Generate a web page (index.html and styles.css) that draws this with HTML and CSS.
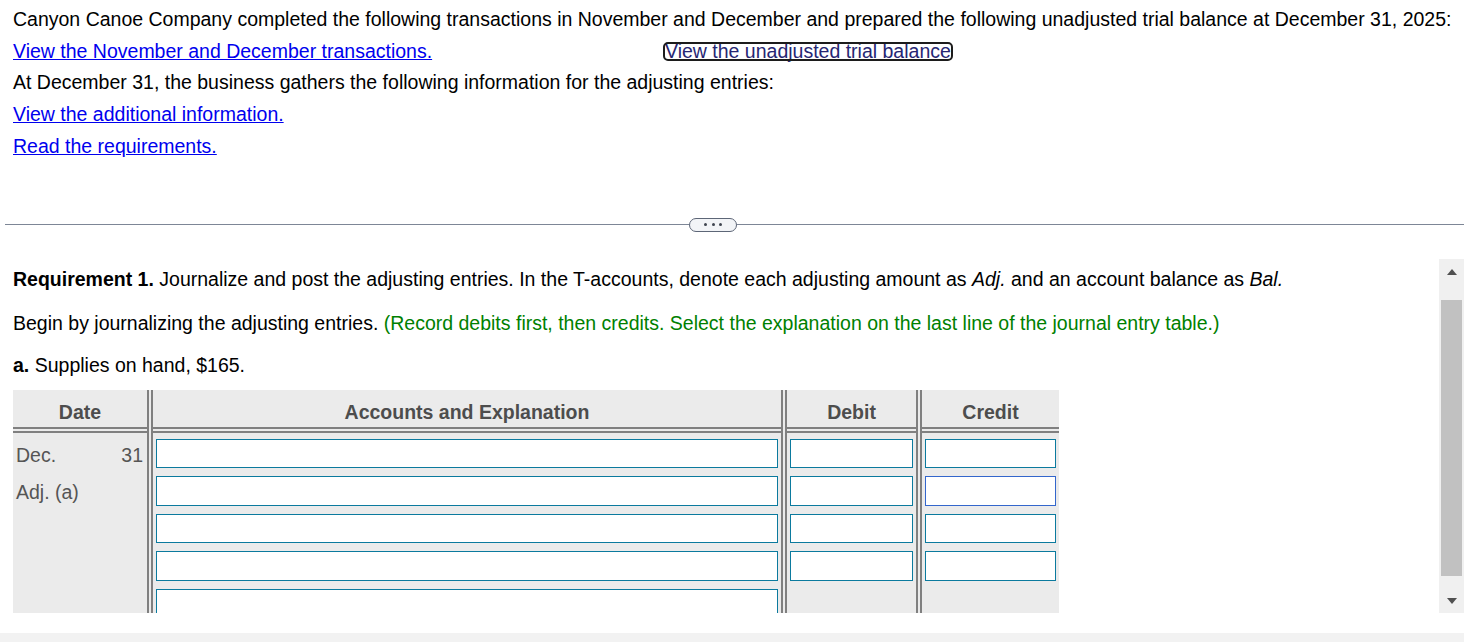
FILE: index.html
```html
<!DOCTYPE html>
<html lang="en">
<head>
<meta charset="utf-8">
<title>Adjusting entries</title>
<link rel="stylesheet" href="styles.css">
</head>
<body>
<div class="page">
  <div class="intro">
    <p class="line nowrap">Canyon Canoe Company completed the following transactions in November and December and prepared the following unadjusted trial balance at December 31, 2025:</p>
    <div class="line link-row">
      <span class="link-cell"><a class="link" href="#">View the November and December transactions.</a></span>
      <a class="link link-focus" href="#">View the unadjusted trial balance</a>
    </div>
    <p class="line">At December 31, the business gathers the following information for the adjusting entries:</p>
    <p class="line"><a class="link" href="#">View the additional information.</a></p>
    <p class="line"><a class="link" href="#">Read the requirements.</a></p>
  </div>

  <div class="divider">
    <span class="divider-line left"></span>
    <span class="pill"><i class="dot"></i><i class="dot"></i><i class="dot"></i></span>
    <span class="divider-line right"></span>
  </div>

  <div class="pane">
    <div class="pane-content">
      <p class="req"><b>Requirement 1.</b> Journalize and post the adjusting entries. In the T-accounts, denote each adjusting amount as <i>Adj.</i> and an account balance as <i>Bal.</i></p>
      <p class="req begin">Begin by journalizing the adjusting entries. <span class="hint">(Record debits first, then credits. Select the explanation on the last line of the journal entry table.)</span></p>
      <p class="req item"><b>a.</b> Supplies on hand, $165.</p>

      <div class="journal">
        <div class="th c-date">Date</div>
        <div class="th c-acct">Accounts and Explanation</div>
        <div class="th c-debit">Debit</div>
        <div class="th c-credit">Credit</div>

        <div class="hsep"></div>

        <div class="td c-date date-cell">
          <div class="date-row"><span>Dec.</span><span>31</span></div>
          <div class="date-row"><span>Adj. (a)</span></div>
        </div>
        <div class="td c-acct">
          <input class="inp" type="text">
          <input class="inp" type="text">
          <input class="inp" type="text">
          <input class="inp" type="text">
          <input class="inp" type="text">
        </div>
        <div class="td c-debit">
          <input class="inp" type="text">
          <input class="inp" type="text">
          <input class="inp" type="text">
          <input class="inp" type="text">
        </div>
        <div class="td c-credit">
          <input class="inp" type="text">
          <input class="inp inp-hover" type="text">
          <input class="inp" type="text">
          <input class="inp" type="text">
        </div>

        <div class="vsep v1"></div>
        <div class="vsep v2"></div>
        <div class="vsep v3"></div>
      </div>
    </div>
    <div class="scrollbar">
      <div class="sb-up"><span class="tri-up"></span></div>
      <div class="sb-thumb"></div>
      <div class="sb-down"><span class="tri-down"></span></div>
    </div>
  </div>

  <div class="footer-strip"></div>
</div>
</body>
</html>
```

FILE: styles.css
```css
html, body {
  margin: 0;
  padding: 0;
  overflow: hidden;
  background: #ffffff;
}

body {
  font-family: "Liberation Sans", Arial, sans-serif;
  font-size: 19.5px;
  color: #000000;
}

.page {
  width: 1464px;
}

/* ---------- intro ---------- */
.intro {
  padding: 4px 0 0 13px;
}

.line {
  margin: 0;
  line-height: 31.7px;
  height: 31.7px;
}

.nowrap {
  white-space: nowrap;
}

.link-row {
  display: flex;
  align-items: baseline;
}

.link-cell {
  width: 652px;
  flex: none;
}

.link {
  color: #0000ee;
  text-decoration: underline;
}

.link-focus {
  display: inline-block;
  line-height: 15px;
  color: #262673;
  outline: 2px solid #1c1c1c;
  border-radius: 3px;
  white-space: nowrap;
}

/* ---------- divider ---------- */
.divider {
  display: flex;
  align-items: flex-start;
  height: 14px;
  margin-top: 55.5px;
}

.divider-line {
  height: 1px;
  margin-top: 6px;
  background: #7d8696;
}

.divider-line.left {
  margin-left: 5px;
  width: 684px;
}

.divider-line.right {
  flex: 1;
}

.pill {
  box-sizing: border-box;
  width: 48px;
  height: 14px;
  border: 1px solid #5d6677;
  border-radius: 7px;
  background: #f2f4f7;
  display: flex;
  align-items: center;
  justify-content: center;
  gap: 4.5px;
}

.dot {
  width: 3px;
  height: 3px;
  border-radius: 50%;
  background: #3f4550;
}

/* ---------- scroll pane ---------- */
.pane {
  display: flex;
  height: 354px;
  margin-top: 27px;
  overflow: hidden;
}

.pane-content {
  flex: 1;
  min-width: 0;
  overflow: hidden;
  padding: 9px 0 0 13px;
}

.req {
  margin: 0;
  line-height: 22px;
  white-space: nowrap;
}

.req.begin {
  margin-top: 22px;
}

.req.item {
  margin-top: 20px;
}

.hint {
  color: #008000;
}

/* ---------- journal table ---------- */
.journal {
  margin-top: 14px;
  width: 1046px;
  display: grid;
  grid-template-columns: 134px 6px 628px 6px 129px 6px 137px;
  grid-template-rows: 37px 6px auto;
  background: #ebebeb;
  color: #555555;
}

.c-date { grid-column: 1; }
.c-acct { grid-column: 3; }
.c-debit { grid-column: 5; }
.c-credit { grid-column: 7; }

.th {
  grid-row: 1;
  box-sizing: border-box;
  text-align: center;
  font-weight: bold;
  color: #4d4d4d;
  padding-top: 7px;
  line-height: 30px;
}

.hsep {
  grid-row: 2;
  grid-column: 1 / -1;
  border-top: 2px solid #808080;
  border-bottom: 2px solid #808080;
}

.vsep {
  grid-row: 1 / -1;
  background: #ebebeb;
  border-left: 2px solid #808080;
  border-right: 2px solid #808080;
}

.v1 { grid-column: 2; }
.v2 { grid-column: 4; }
.v3 { grid-column: 6; }

.td {
  grid-row: 3;
  display: flex;
  flex-direction: column;
  padding-top: 2px;
  padding-bottom: 10px;
}

.date-cell {
  padding-top: 4px;
}

.date-row {
  display: flex;
  justify-content: space-between;
  height: 37.5px;
  line-height: 37.5px;
  padding: 0 4px 0 3px;
}

.inp {
  display: block;
  flex: none;
  box-sizing: border-box;
  width: calc(100% - 6px);
  height: 29.5px;
  margin: 4px 3px;
  padding: 0;
  border: 1px solid #0b7a9e;
  border-radius: 0;
  background: #ffffff;
  outline: none;
}

.inp-hover {
  border-color: #3366cc;
}

/* ---------- scrollbar ---------- */
.scrollbar {
  flex: none;
  width: 25px;
  background: #f0f0f0;
  display: flex;
  flex-direction: column;
  align-items: center;
}

.sb-up {
  height: 41px;
  box-sizing: border-box;
  padding-top: 10px;
}

.tri-up {
  display: block;
  width: 0;
  height: 0;
  border-left: 5.5px solid transparent;
  border-right: 5.5px solid transparent;
  border-bottom: 6px solid #505050;
}

.sb-thumb {
  width: 21px;
  height: 276px;
  background: #c1c1c1;
}

.sb-down {
  box-sizing: border-box;
  padding-top: 22px;
}

.tri-down {
  display: block;
  width: 0;
  height: 0;
  border-left: 5.5px solid transparent;
  border-right: 5.5px solid transparent;
  border-top: 6px solid #505050;
}

/* ---------- footer ---------- */
.footer-strip {
  margin-top: 20px;
  height: 9px;
  background: #f2f2f2;
}
```
